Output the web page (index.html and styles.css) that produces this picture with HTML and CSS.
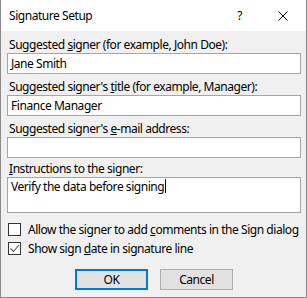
FILE: index.html
```html
<!DOCTYPE html>
<html lang="en">
<head>
    <meta charset="UTF-8">
    <title>Signature Setup</title>
    <link rel="stylesheet" href="styles.css">
</head>
<body>
    <div class="window">
        <div class="titlebar">
            <span class="title">Signature Setup</span>
            <span class="help">?</span>
            <svg class="close" width="10" height="10" viewBox="0 0 10 10">
                <path d="M0.5 0.5 L9.5 9.5 M9.5 0.5 L0.5 9.5" stroke="#000" stroke-width="1" fill="none"/>
            </svg>
        </div>
        <div class="content">
            <label class="field-label">Suggested <u>s</u>igner (for example, John Doe):</label>
            <div class="textbox">Jane Smith</div>

            <label class="field-label">Suggested signer's <u>t</u>itle (for example, Manager):</label>
            <div class="textbox">Finance Manager</div>

            <label class="field-label">Suggested signer's <u>e</u>-mail address:</label>
            <div class="textbox tight"></div>

            <label class="field-label"><u>I</u>nstructions to the signer:</label>
            <div class="textbox multi">Verify the data before signing<span class="caret"></span></div>

            <div class="check-row first">
                <span class="box"></span>
                <span>Allow the signer to add <u>c</u>omments in the Sign dialog</span>
            </div>
            <div class="check-row">
                <span class="box">
                    <svg width="11" height="11" viewBox="0 0 11 11">
                        <path d="M1.5 5.5 L4.5 8.5 L10 2" stroke="#555" stroke-width="1.1" fill="none"/>
                    </svg>
                </span>
                <span>Show sign <u>d</u>ate in signature line</span>
            </div>

            <div class="buttons">
                <button class="btn default">OK</button>
                <button class="btn">Cancel</button>
            </div>
        </div>
    </div>
</body>
</html>
```

FILE: styles.css
```css
body {
    margin: 0;
    font-family: "Noto Sans", "Open Sans", sans-serif;
    font-size: 12px;
    letter-spacing: -0.45px;
    color: #000;
    background: #f0f0f0;
}
.window {
    width: 307px;
    height: 298px;
    box-sizing: border-box;
    border: 1px solid #8a8a8a;
    border-top: none;
    background: #f0f0f0;
}
.titlebar {
    height: 31px;
    background: #fff;
    display: flex;
    align-items: center;
}
.title {
    padding-left: 8px;
    flex: 1;
}
.help {
    margin-right: 36px;
}
.close {
    margin-right: 18px;
}
.content {
    padding: 6px 5px 0 6px;
}
.field-label {
    display: block;
    height: 16px;
    line-height: 16px;
    padding-left: 2px;
}
.field-label + .textbox {
    margin-bottom: 5px;
}
.field-label + .textbox.tight {
    margin-bottom: 3px;
}
.textbox {
    height: 21px;
    box-sizing: border-box;
    border: 1px solid #a6a6a6;
    background: #fff;
    line-height: 19px;
    padding-left: 3px;
}
.textbox.multi {
    height: 36px;
    line-height: 17px;
}
.caret {
    display: inline-block;
    width: 1px;
    height: 14px;
    margin-left: 1px;
    background: #000;
    vertical-align: -2px;
}
.check-row {
    display: flex;
    align-items: center;
    gap: 7px;
    height: 19px;
    padding-left: 1px;
    white-space: nowrap;
}
.check-row.first {
    margin-top: 7px;
}
.box {
    width: 13px;
    height: 13px;
    box-sizing: border-box;
    border: 1px solid #333;
    background: #fff;
    display: flex;
    align-items: center;
    justify-content: center;
}
.buttons {
    display: flex;
    justify-content: center;
    gap: 12px;
    margin-top: 11px;
}
.btn {
    width: 73px;
    height: 21px;
    box-sizing: border-box;
    border: 1px solid #adadad;
    background: #e1e1e1;
    font-family: inherit;
    font-size: 12px;
    letter-spacing: inherit;
    padding: 0;
}
.btn.default {
    border: 2px solid #0078d7;
}
```
